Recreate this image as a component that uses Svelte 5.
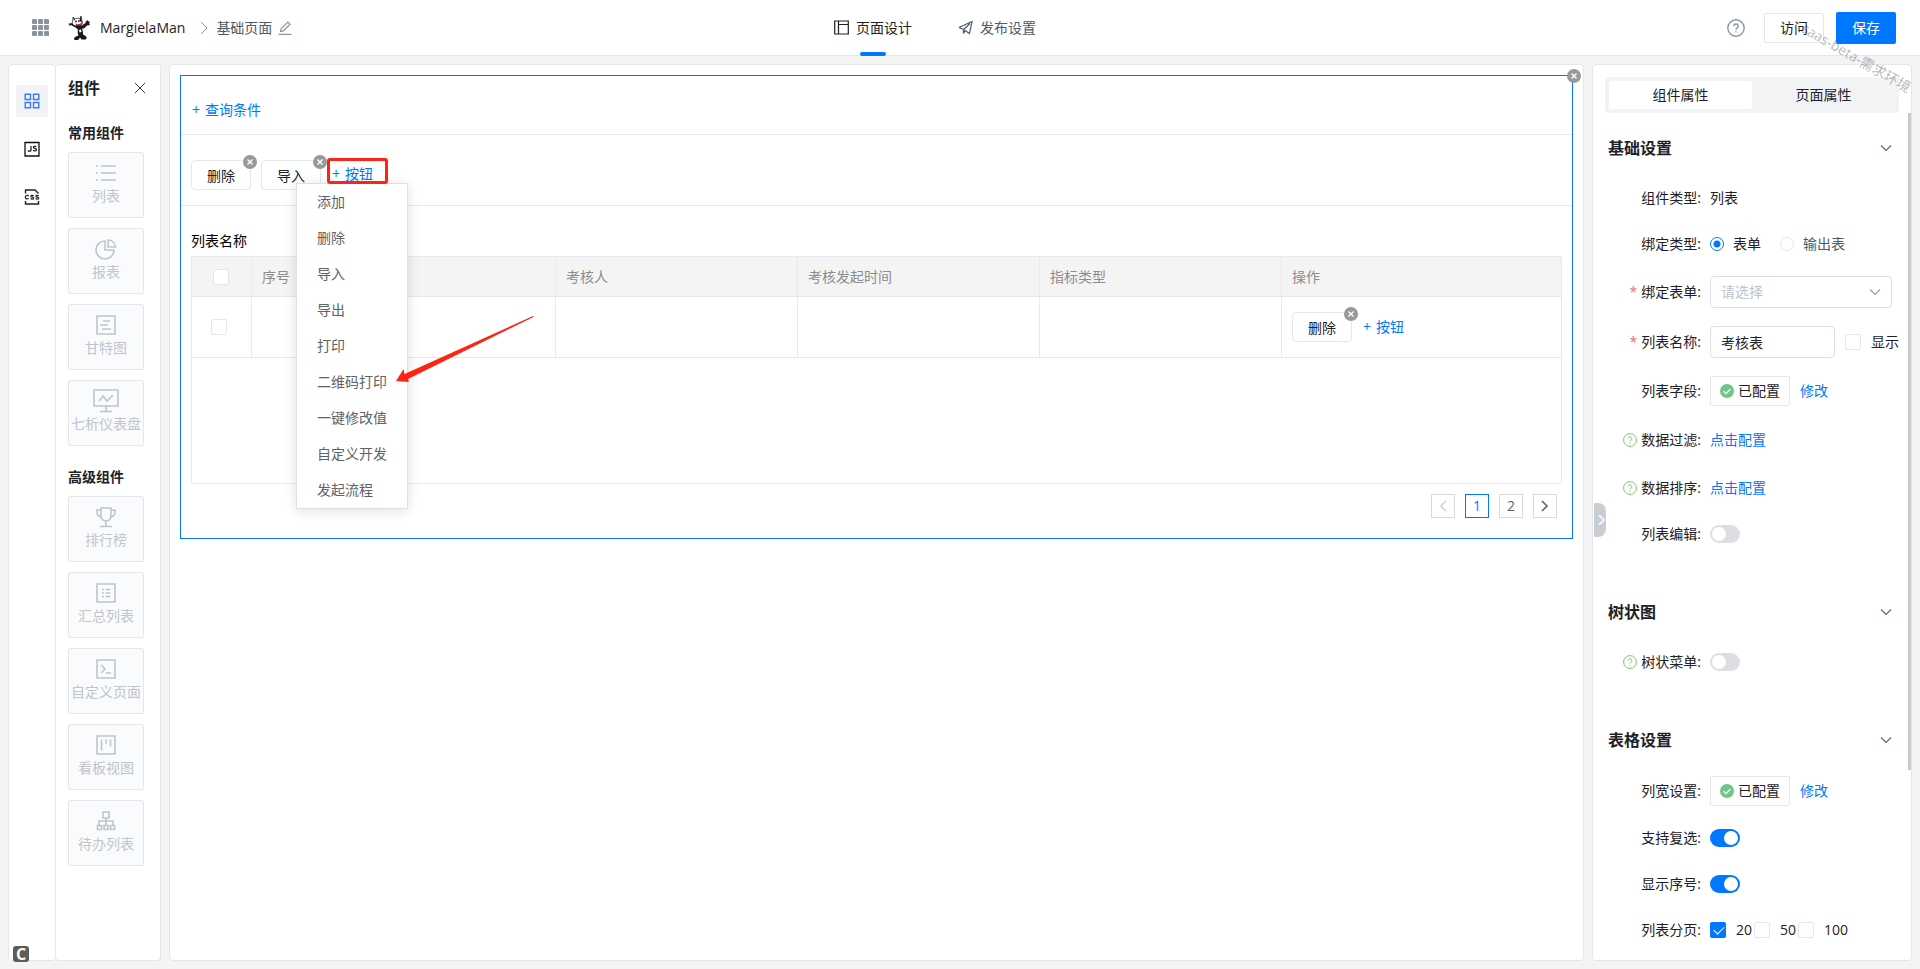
<script>
  let menuOpen = true;
  let bindType = 'form';
  let listName = '考核表';
  let editable = false;
  let treeMenu = false;
  let multiSelect = true;
  let showIndex = true;

  const groups = [
    {
      title: '常用组件',
      items: [
        { name: '列表', path: 'M3 5h2M8 5h15M3 12h2M8 12h15M3 19h2M8 19h15' },
        { name: '报表', path: 'M12 4a9 9 0 1 0 9 9h-9zM15 3v7h7.5A7.5 7.5 0 0 0 15 3z' },
        { name: '甘特图', path: 'M4 3h18v18H4zM10 8h7M7 12h8M9 16h9' },
        { name: '七析仪表盘', path: 'M1 1h24v16H1zM13 17v5M7 22.5h12M6 12l4-5 4 5 6-6' }
      ]
    },
    {
      title: '高级组件',
      items: [
        { name: '排行榜', path: 'M8 3h10v7c0 4-2 6-5 6s-5-2-5-6zM8 5H4v3c0 2 1 3 4 4M18 5h4v3c0 2-1 3-4 4M13 16v5M7 21.5h12' },
        { name: '汇总列表', path: 'M4 3h18v18H4zM9 8.5h2M12.500 8.500h5M9 12h2M12.500 12h5M9 15.500h2M12.500 15.500h5' },
        { name: '自定义页面', path: 'M4 3h18v18H4zM8 8l4 4-4 4M13 16h5' },
        { name: '看板视图', path: 'M4 3h18v18H4zM8.500 6.500v11M13 6.500v4M17.500 6.500v7' },
        { name: '待办列表', path: 'M10 3h6v6h-6zM13 9v7M6 16v-4h14v4M4.500 16.500h4v4h-4zM11 16.500h4v4h-4zM17.500 16.500h4v4h-4z' }
      ]
    }
  ];

  const menuItems = ['添加', '删除', '导入', '导出', '打印', '二维码打印', '一键修改值', '自定义开发', '发起流程'];
  const columns = ['序号', '', '考核人', '考核发起时间', '指标类型', '操作'];
  const dots = [0, 6, 12];

  let pageSizes = [
    { value: 20, checked: true },
    { value: 50, checked: false },
    { value: 100, checked: false }
  ];
</script>

{#snippet remove()}
  <svg class="remove" viewBox="0 0 14 14">
    <circle cx="7" cy="7" r="7" fill="#999" />
    <path d="M4.500 4.500l5 5M9.500 4.500l-5 5" stroke="#fff" stroke-width="1.400" />
  </svg>
{/snippet}

{#snippet chevron()}
  <svg class="chevron" width="12" height="8" viewBox="0 0 12 8">
    <path d="M1 1.500l5 5 5-5" />
  </svg>
{/snippet}

{#snippet tip()}
  <svg class="tip" width="14" height="14" viewBox="0 0 14 14">
    <circle cx="7" cy="7" r="6.400" />
    <path d="M5.200 5.600a1.800 1.800 0 1 1 2.700 1.600c-.6.4-.9.7-.9 1.400M7 9.800v1" />
  </svg>
{/snippet}

{#snippet configured()}
  <button class="btn configured">
    <svg width="14" height="14" viewBox="0 0 14 14">
      <circle cx="7" cy="7" r="7" fill="#6cc788" />
      <path d="M3.500 7.200l2.500 2.400 4.500-4.600" fill="none" stroke="#fff" stroke-width="1.300" />
    </svg>
    已配置
  </button>
  <a class="link edit" href="#edit">修改</a>
{/snippet}

<div class="app">
  <header class="header">
    <div class="header-left">
      <svg width="17" height="17" viewBox="0 0 17 17" fill="#8a93a0">
        {#each dots as y}
          {#each dots as x}
            <rect {x} {y} width="5" height="5" rx="1" />
          {/each}
        {/each}
      </svg>
      <svg class="logo" width="24" height="26" viewBox="0 0 24 26">
        <path d="M5 2l2 2c2-1 4-1 5 0l1-3 1 5c1 3 0 4-2 5-3 2-6 1-8-1C4 8 5 5 5 2z" fill="#fff" stroke="#333" stroke-width=".8" />
        <path d="M5 2l2 2-1 2zM12 4l1-3 1 7-2-2zM4 8l1 1-.5 1z" fill="#1c1818" />
        <path d="M7.500 8.500c2 1 4 1 6-1l.5 2.500-3 1.500-3-1z" fill="#c92a2a" />
        <path d="M7 12l-4-2-2 1 .5-1.500L0 9l3-1 4 2.500h7l4-3-1-1.500 1.500.5 1-1.500 1 1.500 2 .5-1.500 1 1 2-3 .5-3 3h-2c1 2 1 4 1 6l2.500 1.500c1.500 1 1.500 3 0 3.500h-4l-1.500-2-2 2.500H6.500c-1-1.500 0-3 1.500-3.500l2.500-1c-1-2-1-4-.5-6z" fill="#1c1818" />
        <path d="M11 15l2-.5.5 2.500-2 .5z" fill="#fff" />
        <circle cx="8" cy="6.500" r=".9" fill="#222" />
        <circle cx="11" cy="6" r=".9" fill="#222" />
      </svg>
      <span class="app-name">MargielaMan</span>
      <svg width="8" height="14" viewBox="0 0 8 14"><path d="M1 1l6 6-6 6" fill="none" stroke="#8a93a0" /></svg>
      <span class="page-name">基础页面</span>
      <svg width="14" height="14" viewBox="0 0 14 14" fill="none" stroke="#8a93a0" stroke-width="1.200">
        <path d="M2.500 10.500l.6-2.800L9.800 1l2.200 2.200-6.700 6.700zM0.500 13.300h13" />
      </svg>
    </div>
    <nav class="tabs">
      <a class="tab active" href="#design">
        <svg width="15" height="15" viewBox="0 0 15 15"><path d="M.7 1h13.600v13H.7zM4.500 1v13M4.500 4.500h9.800" /></svg>
        页面设计
      </a>
      <a class="tab" href="#publish">
        <svg width="15" height="15" viewBox="0 0 15 15"><path d="M1 7.500L14 1.500l-2.500 12-4.500-3-1.500 3V9.500L12 3.500M1 7.500l4.500 2" /></svg>
        发布设置
      </a>
    </nav>
    <div class="header-right">
      <svg width="18" height="18" viewBox="0 0 18 18" fill="none" stroke="#8a93a0" stroke-width="1.400">
        <circle cx="9" cy="9" r="8.200" />
        <path d="M6.800 7.200a2.200 2.200 0 1 1 3.300 1.900c-.8.5-1.100.8-1.100 1.700M9 12.300v1.300" />
      </svg>
      <button class="btn visit">访问</button>
      <button class="btn primary">保存</button>
    </div>
  </header>

  <main class="main">
    <aside class="left">
      <div class="rail">
        <button class="rail-item active" aria-label="组件">
          <svg width="16" height="16" viewBox="0 0 16 16" fill="none" stroke="#3f78ff" stroke-width="1.400">
            <path d="M1.200 1.200h5.300v5.300H1.200zM9.500 1.200h5.300v5.300H9.500zM1.200 9.500h5.300v5.300H1.200zM9.500 9.500h5.300v5.300H9.500z" />
          </svg>
        </button>
        <button class="rail-item" aria-label="JS">
          <svg width="16" height="16" viewBox="0 0 16 16" fill="none" stroke="#111">
            <path d="M1 1.500h14v13.500H1z" stroke-width="1.300" />
            <path d="M7 5v4.200c0 1.200-2.500 1.400-3 .2M12.300 5.800c-1-.9-3-.7-3 .5 0 1.500 3.200.8 3.200 2.400 0 1.500-2.500 1.600-3.400.5" stroke-width="1.200" />
          </svg>
        </button>
        <button class="rail-item" aria-label="CSS">
          <svg width="16" height="16" viewBox="0 0 16 16" fill="none" stroke="#222">
            <path d="M1.500 4.500V1h9.500l3.500 3.500M1.500 12v3h13v-3" stroke-width="1.400" />
            <path d="M4.700 7c-1.300-1.200-3.400-.5-3.400 1.200s2.100 2.400 3.400 1.200M9.600 7c-.8-.9-2.800-.8-2.800.2 0 1.200 3 .7 3 2 0 1.100-2.300 1.200-3.100.3M14.600 7c-.8-.9-2.800-.8-2.800.2 0 1.200 3 .7 3 2 0 1.100-2.300 1.200-3.100.3" stroke-width="1.200" />
          </svg>
        </button>
      </div>
      <div class="library">
        <div class="library-head">
          <h2>组件</h2>
          <button class="close" aria-label="关闭">
            <svg width="12" height="12" viewBox="0 0 12 12"><path d="M1 1l10 10M11 1L1 11" stroke="#444" /></svg>
          </button>
        </div>
        {#each groups as group}
          <h3>{group.title}</h3>
          <div class="cards">
            {#each group.items as item}
              <button class="card">
                <svg width="26" height="24" viewBox="0 0 26 24"><path d={item.path} /></svg>
                {item.name}
              </button>
            {/each}
          </div>
        {/each}
      </div>
    </aside>

    <section class="canvas">
      <div class="widget">
        {@render remove()}
        <div class="query">
          <button class="link add"><span>+</span>查询条件</button>
        </div>
        <div class="toolbar">
          <button class="btn tool">删除{@render remove()}</button>
          <button class="btn tool">导入{@render remove()}</button>
          <div class="dropdown">
            <button class="link add" on:click={() => (menuOpen = !menuOpen)}><span>+</span>按钮</button>
            {#if menuOpen}
              <ul class="menu">
                {#each menuItems as item}
                  <li><button>{item}</button></li>
                {/each}
              </ul>
            {/if}
            <div class="mark"></div>
            <svg class="arrow" width="140" height="68" viewBox="0 0 140 68">
              <path d="M0 66L7.500 54l1 5L137 1l.5 1L12 64l1 3z" fill="#ff2314" />
            </svg>
          </div>
        </div>
        <div class="list">
          <div class="list-name">列表名称</div>
          <div class="table-wrap">
            <table>
              <colgroup>
                <col class="col-check" />
                <col class="col-index" />
                <col span="4" />
                <col class="col-actions" />
              </colgroup>
              <thead>
                <tr>
                  <th class="check"><input type="checkbox" aria-label="全选" /></th>
                  {#each columns as column}
                    <th>{column}</th>
                  {/each}
                </tr>
              </thead>
              <tbody>
                <tr>
                  <td class="check"><input type="checkbox" aria-label="选择" /></td>
                  <td></td>
                  <td></td>
                  <td></td>
                  <td></td>
                  <td></td>
                  <td>
                    <div class="actions">
                      <button class="btn tool">删除{@render remove()}</button>
                      <button class="link add"><span>+</span>按钮</button>
                    </div>
                  </td>
                </tr>
              </tbody>
            </table>
          </div>
          <div class="pager">
            <button class="prev" aria-label="上一页">
              <svg width="8" height="12" viewBox="0 0 8 12"><path d="M7 1L2 6l5 5" /></svg>
            </button>
            <button class="current">1</button>
            <button>2</button>
            <button aria-label="下一页">
              <svg width="8" height="12" viewBox="0 0 8 12"><path d="M1 1l5 5-5 5" /></svg>
            </button>
          </div>
        </div>
      </div>
    </section>

    <aside class="props">
      <div class="segment">
        <button class="active">组件属性</button>
        <button>页面属性</button>
      </div>
      <div class="form">
        <section>
          <h2>基础设置 {@render chevron()}</h2>
          <div class="row">
            <span class="label">组件类型:</span>
            <span>列表</span>
          </div>
          <div class="row">
            <span class="label">绑定类型:</span>
            <label class="radio"><input type="radio" value="form" bind:group={bindType} />表单</label>
            <label class="radio muted"><input type="radio" value="output" bind:group={bindType} />输出表</label>
          </div>
          <div class="row tall">
            <label class="label" for="bind-form"><i>*</i>绑定表单:</label>
            <div class="select">
              <select id="bind-form">
                <option>请选择</option>
              </select>
              {@render chevron()}
            </div>
          </div>
          <div class="row tall">
            <label class="label" for="list-name"><i>*</i>列表名称:</label>
            <input class="text" id="list-name" type="text" bind:value={listName} />
            <label class="show"><input type="checkbox" />显示</label>
          </div>
          <div class="row">
            <span class="label">列表字段:</span>
            {@render configured()}
          </div>
          <div class="row tall">
            <span class="label">{@render tip()}数据过滤:</span>
            <a class="link" href="#filter">点击配置</a>
          </div>
          <div class="row">
            <span class="label">{@render tip()}数据排序:</span>
            <a class="link" href="#sort">点击配置</a>
          </div>
          <div class="row">
            <label class="label" for="editable">列表编辑:</label>
            <input class="switch" id="editable" type="checkbox" bind:checked={editable} />
          </div>
        </section>
        <section>
          <h2>树状图 {@render chevron()}</h2>
          <div class="row">
            <label class="label" for="tree-menu">{@render tip()}树状菜单:</label>
            <input class="switch" id="tree-menu" type="checkbox" bind:checked={treeMenu} />
          </div>
        </section>
        <section>
          <h2>表格设置 {@render chevron()}</h2>
          <div class="row">
            <span class="label">列宽设置:</span>
            {@render configured()}
          </div>
          <div class="row">
            <label class="label" for="multi">支持复选:</label>
            <input class="switch" id="multi" type="checkbox" bind:checked={multiSelect} />
          </div>
          <div class="row">
            <label class="label" for="show-index">显示序号:</label>
            <input class="switch" id="show-index" type="checkbox" bind:checked={showIndex} />
          </div>
          <div class="row">
            <span class="label">列表分页:</span>
            {#each pageSizes as size}
              <label class="size"><input type="checkbox" bind:checked={size.checked} />{size.value}</label>
            {/each}
          </div>
        </section>
      </div>
      <div class="thumb"></div>
      <button class="handle" aria-label="收起">
        <svg width="8" height="12" viewBox="0 0 8 12"><path d="M2 1l5 5-5 5" fill="none" stroke="#fff" stroke-width="1.500" /></svg>
      </button>
    </aside>
  </main>

  <div class="corner">C</div>
  <div class="watermark">saas-beta-需求环境</div>
</div>

<style>
  :global(body) {
    margin: 0;
  }

  .app {
    position: relative;
    display: flex;
    flex-direction: column;
    height: 100vh;
    overflow: hidden;
    background: #f4f4f5;
    color: #1d2129;
    font-family: 'Open Sans', 'Noto Sans CJK SC', sans-serif;
    font-size: 14px;
    line-height: 20px;
  }

  .app * {
    box-sizing: border-box;
  }

  svg {
    flex: none;
  }

  button,
  input,
  select {
    margin: 0;
    padding: 0;
    border: none;
    background: none;
    color: inherit;
    font: inherit;
    cursor: pointer;
  }

  a {
    color: inherit;
    text-decoration: none;
  }

  h2,
  h3 {
    margin: 0;
    font-weight: 700;
  }

  h2 {
    font-size: 16px;
    line-height: 24px;
  }

  .header {
    display: grid;
    grid-template-columns: 1fr auto 1fr;
    height: 56px;
    padding: 0 24px 0 32px;
    border-bottom: 1px solid #e5e6eb;
    background: #fff;
  }

  .header-left,
  .header-right {
    display: flex;
    align-items: center;
  }

  .header-right {
    justify-content: flex-end;
    gap: 12px;
  }

  .logo {
    margin: 0 8px 0 19px;
  }

  .app-name {
    margin-right: 15px;
  }

  .page-name {
    margin: 0 6px 0 8px;
    color: #4e5969;
  }

  .tabs {
    display: flex;
    gap: 46px;
    padding-right: 58px;
  }

  .tab {
    position: relative;
    display: flex;
    align-items: center;
    gap: 7px;
    color: #4e5969;
  }

  .tab svg {
    fill: none;
    stroke: currentColor;
    stroke-width: 1.2;
  }

  .tab.active {
    color: #1d2129;
  }

  .tab.active::after {
    content: '';
    position: absolute;
    bottom: -1px;
    left: 50%;
    width: 26px;
    height: 4px;
    border-radius: 2px;
    background: #0077ff;
    transform: translateX(-50%);
  }

  .btn {
    position: relative;
    width: 60px;
    height: 30px;
    border: 1px solid #e5e6eb;
    border-radius: 2px;
    background: #fff;
  }

  .visit {
    margin-left: 7px;
  }

  .btn.primary {
    height: 32px;
    border: none;
    background: #0077ff;
    color: #fff;
  }

  .link {
    color: #0077ff;
  }

  .add {
    padding-left: 1px;
  }

  .add span {
    margin-right: 5px;
  }

  .main {
    display: flex;
    flex: 1;
    gap: 8px;
    min-height: 0;
    padding: 8px;
  }

  .left {
    display: flex;
  }

  .rail,
  .library,
  .canvas,
  .props {
    border: 1px solid #e5e6eb;
    border-radius: 4px;
    background: #fff;
  }

  .rail {
    display: flex;
    flex-direction: column;
    align-items: center;
    gap: 16px;
    width: 48px;
    padding-top: 20px;
  }

  .rail-item {
    display: flex;
    align-items: center;
    justify-content: center;
    width: 32px;
    height: 32px;
    border-radius: 2px;
  }

  .rail-item.active {
    background: #f2f3f5;
  }

  .library {
    padding: 11px 16px 0 12px;
    border-left: none;
  }

  .library-head {
    display: flex;
    align-items: center;
    justify-content: space-between;
    padding-bottom: 2px;
  }

  .close {
    display: flex;
    margin-right: -2px;
  }

  h3 {
    margin: 21px 0 9px;
    font-size: 14px;
    line-height: 20px;
  }

  .cards {
    display: flex;
    flex-direction: column;
    gap: 10px;
  }

  .card {
    display: flex;
    flex-direction: column;
    align-items: center;
    gap: 2px;
    width: 76px;
    height: 66px;
    padding-top: 8px;
    border: 1px solid #e5e6eb;
    border-radius: 2px;
    background: #fafbfd;
    color: #c0c4cc;
    line-height: 18px;
    white-space: nowrap;
  }

  .card svg {
    fill: none;
    stroke: currentColor;
    stroke-width: 1.6;
  }

  .canvas {
    flex: 1;
    min-width: 0;
    padding: 10px;
  }

  .widget {
    position: relative;
    border: 1px solid #0077ff;
  }

  .remove {
    position: absolute;
    top: -6px;
    right: -7px;
    width: 14px;
    height: 14px;
  }

  .widget > .remove {
    top: -7px;
    right: -9px;
  }

  .query {
    padding: 24px 10px 14px;
    border-bottom: 1px solid #e5e6eb;
  }

  .toolbar {
    display: flex;
    gap: 10px;
    padding: 25px 10px 15px;
    border-bottom: 1px solid #e5e6eb;
  }

  .tool {
    padding-top: 2px;
    border-radius: 4px;
  }

  .dropdown {
    position: relative;
    padding-top: 4px;
  }

  .menu {
    position: absolute;
    top: 23px;
    left: -35px;
    z-index: 2;
    width: 112px;
    margin: 0;
    padding: 0;
    border: 1px solid #dcdfe6;
    background: #fff;
    box-shadow: 0 2px 12px rgba(0, 0, 0, 0.12);
    list-style: none;
  }

  .menu button {
    width: 100%;
    height: 36px;
    padding-left: 20px;
    color: #606266;
    text-align: left;
    white-space: nowrap;
  }

  /* highlight frame around the trigger and the arrow to the menu entry */
  .mark {
    position: absolute;
    top: -2px;
    left: -4px;
    z-index: 3;
    width: 61px;
    height: 26px;
    border: 3px solid #ff2314;
    border-radius: 3px;
    pointer-events: none;
  }

  .arrow {
    position: absolute;
    top: 155px;
    left: 65px;
    z-index: 3;
    pointer-events: none;
  }

  .list {
    padding: 24px 10px 20px;
  }

  .list-name {
    margin-bottom: 4px;
    color: #000;
    line-height: 22px;
  }

  .table-wrap {
    height: 228px;
    border: 1px solid #e9eaf0;
  }

  table {
    width: 100%;
    border-collapse: separate;
    border-spacing: 0;
    table-layout: fixed;
  }

  .col-check {
    width: 60px;
  }

  .col-index {
    width: 62px;
  }

  .col-actions {
    width: 279px;
  }

  th,
  td {
    padding: 0 10px;
    border-right: 1px solid #e9eaf0;
    border-bottom: 1px solid #e5e6eb;
    text-align: left;
  }

  th:last-child,
  td:last-child {
    border-right: none;
  }

  th {
    height: 40px;
    background: #f4f4f5;
    color: #8c8c8c;
    font-weight: 400;
  }

  td {
    height: 61px;
  }

  th.check {
    padding-left: 21px;
  }

  td.check {
    padding-left: 19px;
  }

  .actions {
    display: flex;
    align-items: center;
    gap: 10px;
  }

  input[type='checkbox'],
  input[type='radio'] {
    display: block;
    flex: none;
    width: 16px;
    height: 16px;
    border: 1px solid #e5e6eb;
    border-radius: 2px;
    background: #fff;
    appearance: none;
  }

  .size input:checked {
    border: none;
    background: #0077ff;
  }

  .size input:checked::after {
    content: '';
    display: block;
    width: 9px;
    height: 5px;
    margin: 4px 0 0 4px;
    border: solid #fff;
    border-width: 0 0 1px 1px;
    transform: rotate(-45deg);
  }

  .pager {
    display: flex;
    justify-content: flex-end;
    gap: 10px;
    padding: 10px 5px 0;
  }

  .pager button {
    display: flex;
    align-items: center;
    justify-content: center;
    width: 24px;
    height: 24px;
    border: 1px solid #d9dade;
    color: #606266;
    font-size: 14px;
  }

  .pager button.current {
    border-color: #0077ff;
    color: #0077ff;
  }

  .pager button.prev {
    color: #d0d2d6;
  }

  .pager svg {
    fill: none;
    stroke: currentColor;
    stroke-width: 1.6;
  }

  .props {
    position: relative;
    width: 320px;
    padding: 12px;
  }

  .segment {
    display: flex;
    padding: 4px;
    border-radius: 4px;
    background: #f2f3f5;
  }

  .segment button {
    flex: 1;
    height: 28px;
    border-radius: 3px;
  }

  .segment .active {
    background: #fff;
  }

  .form {
    display: flex;
    flex-direction: column;
    gap: 52px;
    padding: 23px 0 0 3px;
  }

  .form section {
    display: flex;
    flex-direction: column;
    gap: 18px;
  }

  .form h2 {
    display: flex;
    align-items: center;
    justify-content: space-between;
    margin-bottom: 6px;
    padding-right: 7px;
  }

  .chevron {
    fill: none;
    stroke: #5c6470;
    stroke-width: 1.1;
  }

  .row {
    display: flex;
    align-items: center;
    min-height: 28px;
  }

  .row.tall {
    min-height: 32px;
  }

  .label {
    display: flex;
    align-items: center;
    justify-content: flex-end;
    flex: none;
    width: 93px;
    margin-right: 9px;
  }

  .label i {
    margin-right: 4px;
    color: #f56c6c;
    font-style: normal;
  }

  .tip {
    margin-right: 4px;
    fill: none;
    stroke: #74c96c;
  }

  .radio {
    display: flex;
    align-items: center;
    gap: 9px;
    margin-right: 19px;
  }

  .radio.muted {
    color: #4e5969;
  }

  .radio input[type='radio'] {
    width: 14px;
    height: 14px;
    border-radius: 50%;
  }

  .radio input[type='radio']:checked {
    border-color: #0077ff;
    background: radial-gradient(circle, #0077ff 3px, #fff 4px);
  }

  .select {
    position: relative;
    flex: 1;
    margin-right: 7px;
  }

  .select select,
  .text {
    display: block;
    width: 100%;
    height: 32px;
    padding: 0 10px;
    border: 1px solid #dcdfe6;
    border-radius: 4px;
    background: #fff;
    appearance: none;
  }

  .select select {
    color: #c0c4cc;
  }

  .select .chevron {
    position: absolute;
    top: 12px;
    right: 11px;
    stroke: #999;
    pointer-events: none;
  }

  .row .text {
    width: 125px;
  }

  .show {
    display: flex;
    align-items: center;
    gap: 10px;
    margin: 0 -12px 0 10px;
    white-space: nowrap;
  }

  .configured {
    display: flex;
    align-items: center;
    justify-content: center;
    gap: 4px;
    width: 80px;
  }

  .edit {
    margin-left: 10px;
  }

  .row input.switch {
    width: 30px;
    height: 18px;
    padding: 2px;
    border: none;
    border-radius: 9px;
    background: #dcdee2;
  }

  .switch::before {
    content: '';
    display: block;
    width: 14px;
    height: 14px;
    border-radius: 50%;
    background: #fff;
  }

  .row input.switch:checked {
    padding-left: 14px;
    background: #0077ff;
  }

  .size {
    display: flex;
    align-items: center;
    gap: 10px;
    margin-right: 2px;
  }

  .thumb {
    position: absolute;
    top: 48px;
    right: 0;
    width: 3px;
    height: calc(74% - 5px);
    background: #c8c9cc;
  }

  .handle {
    position: absolute;
    top: 438px;
    left: 1px;
    display: flex;
    align-items: center;
    justify-content: flex-end;
    width: 12px;
    height: 34px;
    padding-right: 1px;
    border-radius: 0 8px 8px 0;
    background: #c9cdd4;
  }

  .corner {
    position: absolute;
    bottom: 7px;
    left: 13px;
    width: 16px;
    height: 16px;
    border-radius: 3px;
    background: #5c5c5c;
    color: #fffbe8;
    font-size: 16px;
    font-weight: 700;
    line-height: 16px;
    text-align: center;
  }

  .watermark {
    position: absolute;
    top: 17px;
    left: calc(100% - 117px);
    color: rgba(0, 0, 0, 0.3);
    line-height: 20px;
    white-space: nowrap;
    transform: rotate(30deg);
    transform-origin: 0 50%;
    pointer-events: none;
  }
</style>
